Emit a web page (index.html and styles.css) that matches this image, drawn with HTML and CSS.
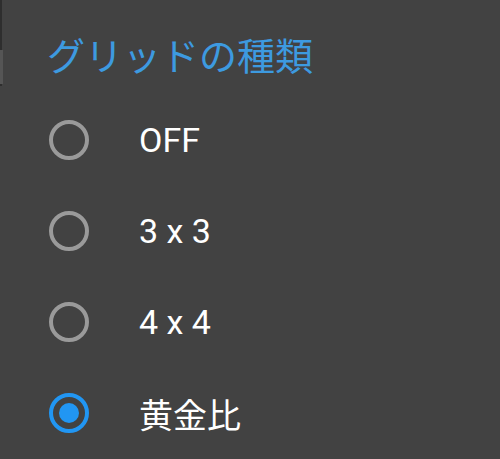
FILE: index.html
```html
<!DOCTYPE html>
<html lang="ja">
<head>
<meta charset="utf-8">
<link rel="stylesheet" href="styles.css">
</head>
<body>
<div class="edge"></div>
<div class="dialog">
  <h1 class="title">グリッドの種類</h1>
  <ul class="options">
    <li class="option"><span class="radio"></span><span class="label">OFF</span></li>
    <li class="option"><span class="radio"></span><span class="label">3 x 3</span></li>
    <li class="option"><span class="radio"></span><span class="label">4 x 4</span></li>
    <li class="option selected"><span class="radio"></span><span class="label">黄金比</span></li>
  </ul>
</div>
</body>
</html>
```
FILE: styles.css
```css
html, body {
  margin: 0;
  padding: 0;
  background: #424242;
  width: 500px;
  height: 459px;
  overflow: hidden;
}
body {
  font-family: Roboto, "Noto Sans CJK JP", sans-serif;
  position: relative;
}
.edge {
  position: absolute;
  left: 0;
  top: 0;
  width: 2px;
  height: 86px;
  background: #2e2e2e;
}
.edge::after {
  content: "";
  position: absolute;
  left: 0;
  top: 50px;
  width: 3px;
  height: 34px;
  background: #555;
}
.dialog {
  padding: 35px 0 0 47px;
}
.title {
  margin: 0;
  font-weight: 400;
  font-size: 38px;
  line-height: 44px;
  color: #3d9ae0;
}
.options {
  list-style: none;
  margin: 41px 0 0 0;
  padding: 0;
  display: flex;
  flex-direction: column;
  gap: 51px;
}
.option {
  display: flex;
  align-items: center;
  height: 40px;
}
.radio {
  box-sizing: border-box;
  width: 40px;
  height: 40px;
  border-radius: 50%;
  border: 4px solid #9a9a9a;
  margin-left: 2px;
  display: flex;
  align-items: center;
  justify-content: center;
}
.selected .radio {
  border-color: #2196f3;
}
.selected .radio::after {
  content: "";
  width: 20px;
  height: 20px;
  border-radius: 50%;
  background: #2196f3;
}
.label {
  margin-left: 50px;
  font-size: 34px;
  color: #ffffff;
}
```
